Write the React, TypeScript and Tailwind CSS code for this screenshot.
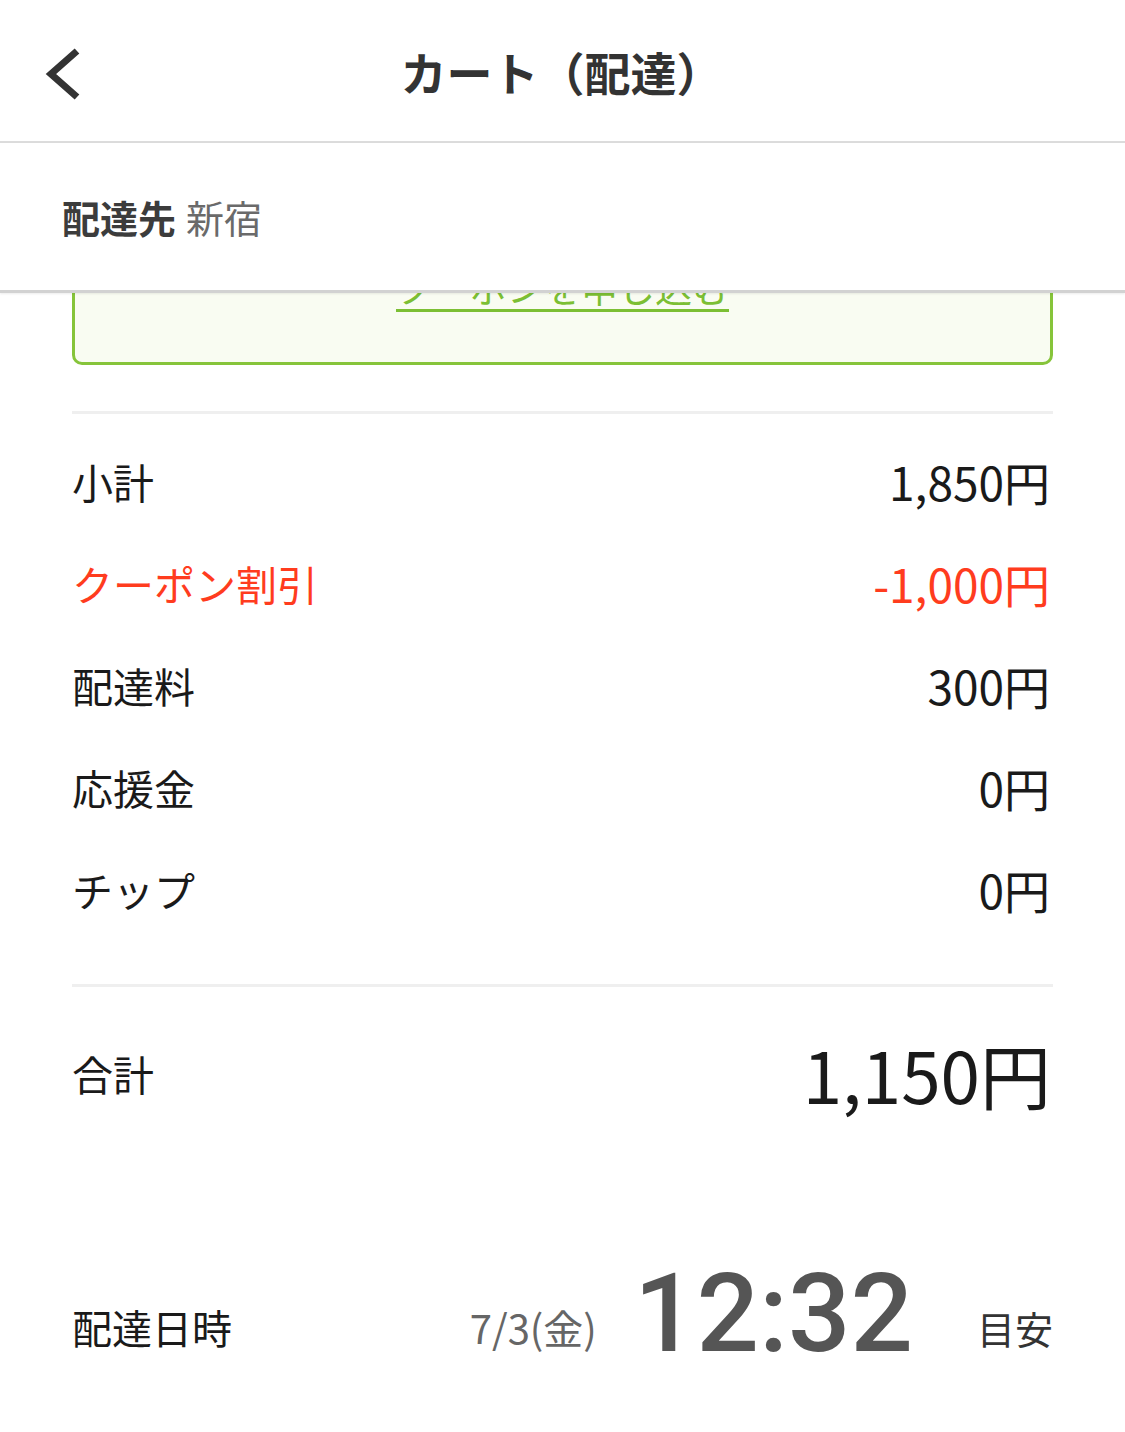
import React from 'react';

type Line = { label: string; value: string; accent?: boolean };

const lines: Line[] = [
  { label: '小計', value: '1,850円' },
  { label: 'クーポン割引', value: '-1,000円', accent: true },
  { label: '配達料', value: '300円' },
  { label: '応援金', value: '0円' },
  { label: 'チップ', value: '0円' },
];

const BackIcon: React.FC = () => (
  <svg width="40" height="56" viewBox="0 0 40 56" fill="none">
    <path d="M33 5 L7 28 L33 51" stroke="#333333" strokeWidth="7" strokeLinejoin="miter" />
  </svg>
);

export default function App() {
  return (
    <div className="min-h-screen bg-white font-[family-name:'Noto_Sans_CJK_JP','Noto_Sans',sans-serif] text-[#1a1a1a]">
      {/* Sticky header */}
      <div className="sticky top-0 z-10 bg-white">
        <div className="flex h-[143px] items-center border-b-[2px] border-[#dcdcdc]">
          <div className="flex w-[120px] items-center pl-[44px] pt-[6px]">
            <BackIcon />
          </div>
          <h1 className="flex-1 pr-[122px] text-center text-[46px] font-bold leading-none text-[#333333]">
            カート（配達）
          </h1>
        </div>
        <div className="flex h-[150px] items-center border-b-[3px] border-[#d2d2d2] px-[62px] shadow-[0_1px_2px_rgba(0,0,0,0.08)]">
          <span className="text-[38px] font-bold leading-none text-[#3c3c3c]">配達先</span>
          <span className="ml-[10px] text-[38px] leading-none text-[#6a6a6a]">新宿</span>
        </div>
      </div>

      <div className="-mt-[78px] px-[72px]">
        {/* Coupon box, partly under the header */}
        <div className="flex h-[150px] justify-center rounded-[10px] border-[3px] border-[#86c43a] bg-[#f9fcf2] pt-[47px]">
          <a className="text-[37px] leading-[44px] text-[#7cbf34] underline decoration-[3px] underline-offset-[6px]">
            クーポンを申し込む
          </a>
        </div>

        <div className="mt-[46px] h-[3px] bg-[#efefef]" />

        <div className="pt-[16px]">
          {lines.map((l) => (
            <div key={l.label} className="flex h-[102px] items-center justify-between">
              <span className={`text-[41px] leading-none ${l.accent ? 'text-[#ff3c1e]' : 'text-[#1a1a1a]'}`}>
                {l.label}
              </span>
              <span className={`mr-[3px] text-[46px] leading-none ${l.accent ? 'text-[#ff3c1e]' : 'text-[#1a1a1a]'}`}>
                {l.value}
              </span>
            </div>
          ))}
        </div>

        <div className="mt-[44px] h-[3px] bg-[#efefef]" />

        <div className="mt-[28px] flex h-[116px] items-center justify-between">
          <span className="text-[41px] leading-none">合計</span>
          <span className="mr-[2px] text-[71px] leading-none">1,150円</span>
        </div>

        <div className="mt-[121px] flex items-baseline justify-between">
          <span className="text-[40px] leading-none">配達日時</span>
          <div className="flex items-baseline">
            <span className="text-[40px] leading-none text-[#666666]">7/3(金)</span>
            <span className="ml-[37px] translate-y-[7px] font-[family-name:Roboto,sans-serif] text-[110px] font-medium leading-none text-[#555555]">
              12:32
            </span>
            <span className="ml-[64px] text-[38px] leading-none text-[#333333]">目安</span>
          </div>
        </div>
      </div>
    </div>
  );
}
